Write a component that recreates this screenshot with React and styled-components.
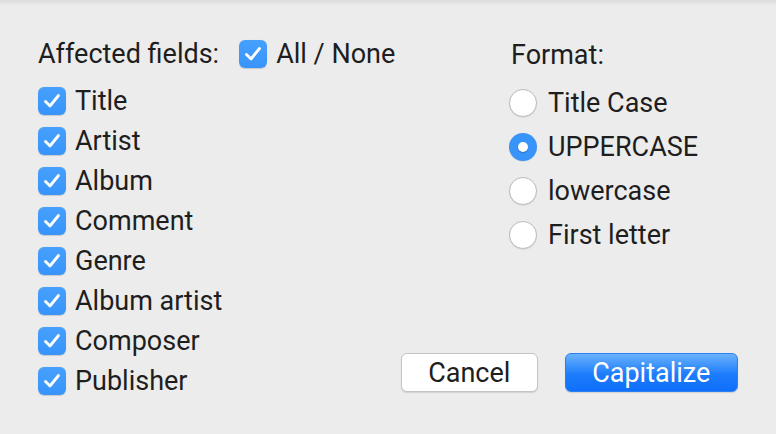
import React, { useState } from 'react'
import styled, { createGlobalStyle } from 'styled-components';

const GlobalStyle = createGlobalStyle`
    html, body {
        margin: 0;
        padding: 0;
        background: #ececec;
    }
    body {
        font-family: Roboto, "Liberation Sans", sans-serif;
        color: #1e1e1e;
    }
`;

const FIELDS = ['Title', 'Artist', 'Album', 'Comment', 'Genre', 'Album artist', 'Composer', 'Publisher'];
const FORMATS = ['Title Case', 'UPPERCASE', 'lowercase', 'First letter'];

const Check = () => (
    <svg width="18" height="16" viewBox="0 0 18 16">
        <path d="M2.5 8.5 L7 13 L15.5 2.5" fill="none" stroke="#fff" strokeWidth="2.8"
            strokeLinecap="round" strokeLinejoin="round" />
    </svg>
);

const CheckRow = ({ label, checked, onToggle }) => (
    <Label onClick={onToggle}>
        <Box checked={checked}>{checked && <Check />}</Box>
        <span>{label}</span>
    </Label>
);

const App = () => {
    const [fields, setFields] = useState(FIELDS.map(() => true));
    const [format, setFormat] = useState(1);
    const all = fields.every(Boolean);

    const toggle = (i) => setFields(fields.map((v, j) => (j === i ? !v : v)));

    return (
        <Window>
            <GlobalStyle />
            <TopShade />
            <Body>
                <LeftCol>
                    <Header>
                        <Caption>Affected fields:</Caption>
                        <CheckRow label="All / None" checked={all}
                            onToggle={() => setFields(FIELDS.map(() => !all))} />
                    </Header>
                    <FieldList>
                        {FIELDS.map((f, i) => (
                            <CheckRow key={f} label={f} checked={fields[i]} onToggle={() => toggle(i)} />
                        ))}
                    </FieldList>
                </LeftCol>
                <RightCol>
                    <FormatTitle>Format:</FormatTitle>
                    <RadioList>
                        {FORMATS.map((f, i) => (
                            <Label key={f} onClick={() => setFormat(i)}>
                                <Radio selected={format === i} />
                                <span>{f}</span>
                            </Label>
                        ))}
                    </RadioList>
                    <Buttons>
                        <Button>Cancel</Button>
                        <Button primary>Capitalize</Button>
                    </Buttons>
                </RightCol>
            </Body>
        </Window>
    )
}

const Window = styled.div`
    width: 776px;
    height: 434px;
    background: #ececec;
    overflow: hidden;
`;

const TopShade = styled.div`
    height: 6px;
    background: linear-gradient(#dcdcdc, #ececec);
`;

const Body = styled.div`
    display: flex;
    padding: 33px 0 0 38px;
    font-size: 27px;
    line-height: 30px;
`;

const LeftCol = styled.div`
    width: 472px;
    display: flex;
    flex-direction: column;
`;

const Header = styled.div`
    display: flex;
    align-items: center;
    gap: 20px;
`;

const Caption = styled.span`
    color: inherit;
`;

const FieldList = styled.div`
    display: flex;
    flex-direction: column;
    gap: 12px;
    margin-top: 18px;
`;

const Label = styled.label`
    display: flex;
    align-items: center;
    gap: 9px;
    height: 28px;
    cursor: default;
    user-select: none;
    white-space: nowrap;
`;

const Box = styled.span`
    width: 28px;
    height: 28px;
    border-radius: 6px;
    box-sizing: border-box;
    display: flex;
    align-items: center;
    justify-content: center;
    flex-shrink: 0;
    background: ${p => (p.checked ? 'linear-gradient(#47a0fd, #3894fb)' : '#fff')};
    border: ${p => (p.checked ? 'none' : '1px solid #b8b8b8')};
    box-shadow: 0 0.5px 1px rgba(0, 0, 0, 0.15);
`;

const RightCol = styled.div`
    width: 228px;
    display: flex;
    flex-direction: column;
`;

const FormatTitle = styled.div`
    margin: 1px 0 0 1px;
`;

const RadioList = styled.div`
    display: flex;
    flex-direction: column;
    gap: 16px;
    margin-top: 19px;
    margin-left: -1px;
    ${Label} { gap: 11px; }
`;

const Radio = styled.span`
    width: 28px;
    height: 28px;
    border-radius: 50%;
    box-sizing: border-box;
    flex-shrink: 0;
    position: relative;
    background: ${p => (p.selected ? '#3994fa' : '#fff')};
    border: ${p => (p.selected ? 'none' : '1px solid #bdbdbd')};
    box-shadow: 0 0.5px 1px rgba(0, 0, 0, 0.12);

    &::after {
        content: '';
        display: ${p => (p.selected ? 'block' : 'none')};
        position: absolute;
        left: 9px;
        top: 9px;
        width: 10px;
        height: 10px;
        border-radius: 50%;
        background: #fff;
        box-shadow: 0 1px 1px rgba(0, 0, 0, 0.25);
    }
`;

const Buttons = styled.div`
    display: flex;
    gap: 27px;
    margin: 104px 0 0 -109px;
`;

const Button = styled.button`
    height: 39px;
    width: ${p => (p.primary ? '174px' : '137px')};
    border-radius: 6px;
    font-family: Roboto, "Liberation Sans", sans-serif;
    font-size: 27px;
    padding: 0;
    color: ${p => (p.primary ? '#fff' : '#1e1e1e')};
    background: ${p => (p.primary ? 'linear-gradient(#6ab2fb, #1c7cfb 55%, #0f6ffa)' : '#fff')};
    border: ${p => (p.primary ? '1px solid #2a80f0' : '1px solid #c4c4c4')};
    box-shadow: 0 1px 1px rgba(0, 0, 0, 0.12);
`;

export default App;
